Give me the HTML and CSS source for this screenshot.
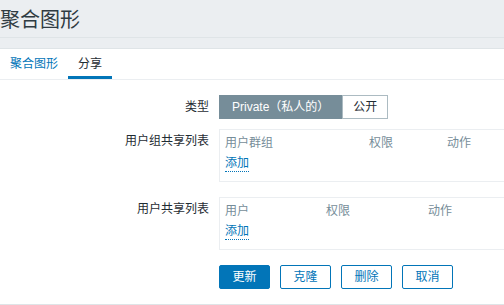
FILE: index.html
```html
<!DOCTYPE html>
<html lang="zh">
<head>
<meta charset="utf-8">
<title>聚合图形</title>
<link rel="stylesheet" href="styles.css">
</head>
<body>
<header class="page-header">
  <h1 class="page-title">聚合图形</h1>
</header>
<main class="panel">
  <ul class="tabs">
    <li class="tab"><a class="tab-link" href="#">聚合图形</a></li>
    <li class="tab tab-active"><span>分享</span></li>
  </ul>
  <form class="form">
    <div class="row">
      <label class="label label-mid">类型</label>
      <div class="segmented">
        <span class="seg seg-on">Private（私人的）</span>
        <span class="seg">公开</span>
      </div>
    </div>
    <div class="row row-list">
      <label class="label">用户组共享列表</label>
      <div class="list-box">
        <div class="list-head cols-group">
          <span>用户群组</span><span>权限</span><span>动作</span>
        </div>
        <div class="list-add"><a class="add-link" href="#">添加</a></div>
      </div>
    </div>
    <div class="row row-list">
      <label class="label">用户共享列表</label>
      <div class="list-box">
        <div class="list-head cols-user">
          <span>用户</span><span>权限</span><span>动作</span>
        </div>
        <div class="list-add"><a class="add-link" href="#">添加</a></div>
      </div>
    </div>
    <div class="row row-buttons">
      <span></span>
      <div class="buttons">
        <button type="button" class="btn btn-primary">更新</button>
        <button type="button" class="btn">克隆</button>
        <button type="button" class="btn">删除</button>
        <button type="button" class="btn">取消</button>
      </div>
    </div>
  </form>
</main>
</body>
</html>
```
FILE: styles.css
```css
html, body {
  margin: 0;
  padding: 0;
  overflow: hidden;
}
body {
  background: #ebeef1;
  color: #1f2c33;
  font-family: "Liberation Sans", Arial, "Noto Sans CJK SC", sans-serif;
  font-size: 12px;
  width: 504px;
  height: 305px;
}
.page-header {
  height: 37px;
  border-bottom: 1px solid #dfe4e7;
  margin-bottom: 10px;
}
.page-title {
  margin: 0;
  font-weight: normal;
  font-size: 20px;
  line-height: 37px;
  color: #2f3b42;
  font-family: "Noto Sans CJK SC", sans-serif;
}
.panel {
  background: #ffffff;
  border-top: 1px solid #dfe4e7;
  border-bottom: 1px solid #dfe4e7;
  padding-bottom: 15px;
}
.tabs {
  list-style: none;
  margin: 0;
  padding: 0;
  display: flex;
  border-bottom: 1px solid #ebeef1;
}
.tab {
  padding: 3px 10px 0;
  line-height: 24px;
  border-bottom: 3px solid transparent;
}
.tab-link {
  color: #0275b8;
  text-decoration: none;
}
.tab-active {
  border-bottom-color: #0275b8;
  color: #1f2c33;
}
.form {
  padding-top: 15px;
}
.row {
  display: grid;
  grid-template-columns: 209px 1fr;
  column-gap: 10px;
}
.row-list {
  margin-top: 10px;
}
.row-list + .row-list {
  margin-top: 15px;
}
.row-buttons {
  margin-top: 15px;
}
.label {
  text-align: right;
  line-height: 20px;
  padding-top: 2px;
}
.label-mid {
  line-height: 24px;
  padding-top: 0;
}
.segmented {
  display: flex;
  height: 24px;
}
.seg {
  box-sizing: border-box;
  height: 24px;
  line-height: 22px;
  padding: 0 10px;
  border: 1px solid #acbbc2;
  background: #ffffff;
  color: #1f2c33;
}
.seg-on {
  padding: 0 12px;
  background: #768d99;
  border-color: #768d99;
  color: #ffffff;
}
.list-box {
  box-sizing: border-box;
  height: 53px;
  border: 1px solid #ebeef1;
  border-right: none;
  padding: 3px 5px 0;
}
.list-head {
  display: grid;
  height: 21px;
  line-height: 21px;
  color: #768d99;
}
.cols-group {
  grid-template-columns: 144px 78px 1fr;
}
.cols-user {
  grid-template-columns: 101px 102px 1fr;
}
.list-add {
  display: flex;
  margin-top: 1px;
}
.add-link {
  display: inline-block;
  line-height: 16px;
  color: #0275b8;
  text-decoration: none;
  border-bottom: 1px dotted #0275b8;
}
.buttons {
  display: flex;
  gap: 10px;
}
.btn {
  box-sizing: border-box;
  height: 24px;
  padding: 0 12.5px;
  border: 1px solid #0275b8;
  border-radius: 2px;
  background: #ffffff;
  color: #0275b8;
  font-family: "Liberation Sans", Arial, "Noto Sans CJK SC", sans-serif;
  font-size: 12px;
  line-height: 22px;
}
.btn-primary {
  background: #0275b8;
  color: #ffffff;
}
```
